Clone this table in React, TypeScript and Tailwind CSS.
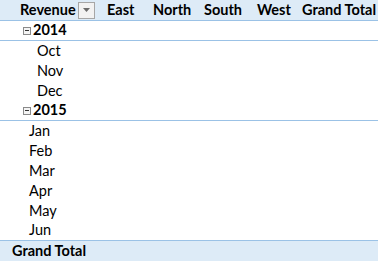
const cols = ['East', 'North', 'South', 'West', 'Grand Total'];
const colWidths = ['w-[46px]', 'w-[51px]', 'w-[53px]', 'w-[45px]', 'flex-1'];

function MinusBox() {
  return (
    <span className="inline-flex items-center justify-center w-[8px] h-[8px] border border-[#8a8a8a] bg-[#f4f4f4] mr-[1px]">
      <span className="block w-[4px] h-[1px] bg-[#333]" />
    </span>
  );
}

function Row({ children, border, short }: { children: React.ReactNode; border?: boolean; short?: boolean }) {
  return (
    <div
      className={`${short ? 'h-[19px]' : 'h-[20px]'} flex items-center ${border ? 'border-b border-[#9bc2e6]' : ''}`}
    >
      {children}
    </div>
  );
}

export default function App() {
  const months2014 = ['Oct', 'Nov', 'Dec'];
  const months2015 = ['Jan', 'Feb', 'Mar', 'Apr', 'May', 'Jun'];

  return (
    <div
      className="w-[378px] h-[261px] bg-white text-black text-[14.5px] leading-none overflow-hidden"
      style={{ fontFamily: 'Lato, "Liberation Sans", sans-serif' }}
    >
      {/* header */}
      <div className="h-[21px] flex items-center bg-[#ddebf7] border-b border-[#9bc2e6] font-bold">
        <div className="w-[98px] flex items-center pl-[20px]">
          <span>Revenue</span>
          <span className="ml-[2px] w-[17px] h-[17px] border border-[#a6a6a6] bg-[#f2f2f2] flex items-center justify-center">
            <svg width="7" height="4" viewBox="0 0 7 4">
              <path d="M0 0H7L3.5 4Z" fill="#6b6b6b" />
            </svg>
          </span>
        </div>
        {cols.map((c, i) => (
          <div key={c} className={`${colWidths[i]} pl-[9px]`}>
            {c}
          </div>
        ))}
      </div>

      <Row border>
        <div className="pl-[23px] flex items-center font-bold gap-[1px]">
          <MinusBox />
          <span>2014</span>
        </div>
      </Row>
      {months2014.map((m) => (
        <Row key={m}>
          <span className="pl-[37px]">{m}</span>
        </Row>
      ))}
      <Row border>
        <div className="pl-[23px] flex items-center font-bold gap-[1px]">
          <MinusBox />
          <span>2015</span>
        </div>
      </Row>
      {months2015.map((m, i) => (
        <Row key={m} short={i === months2015.length - 1}>
          <span className="pl-[29px]">{m}</span>
        </Row>
      ))}

      <div className="h-[21px] flex items-center bg-[#ddebf7] border-t border-[#9bc2e6] font-bold">
        <span className="pl-[12px]">Grand Total</span>
      </div>
    </div>
  );
}
